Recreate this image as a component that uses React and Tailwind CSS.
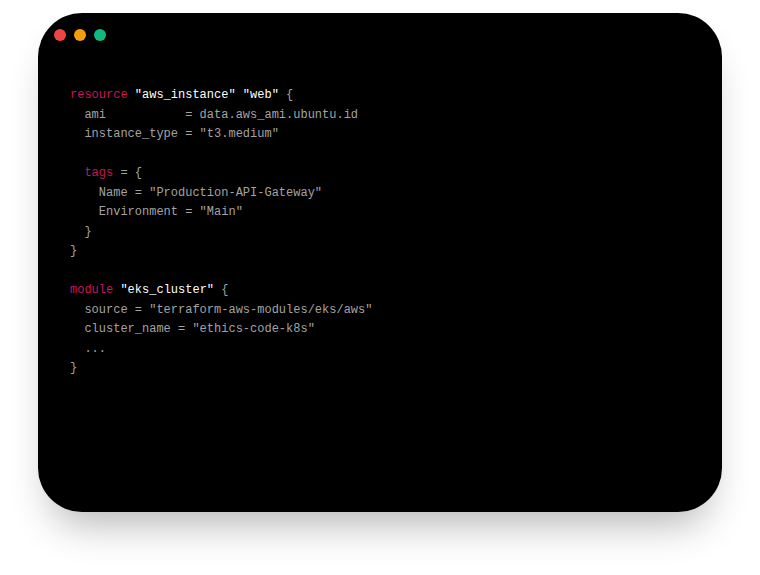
export default function App() {
  const kw = 'text-[#c8145a]';
  const str = 'text-white';
  return (
    <div className="min-h-screen bg-white flex items-start justify-center pt-[13px]">
      <div className="w-[684px] h-[499px] bg-black rounded-[44px] shadow-[0_25px_40px_-14px_rgba(0,0,0,0.3)] overflow-hidden">
        {/* Window controls */}
        <div className="flex gap-2 p-4">
          <span className="w-3 h-3 rounded-full bg-[#ef4444]"></span>
          <span className="w-3 h-3 rounded-full bg-[#f59e0b]"></span>
          <span className="w-3 h-3 rounded-full bg-[#10b981]"></span>
        </div>

        <pre className="px-8 mt-[29px] text-[12px] leading-[19.5px] text-[#a3a3a3] font-['Liberation_Mono',monospace]">
          <span className={kw}>resource</span> <span className={str}>"aws_instance"</span>{' '}
          <span className={str}>"web"</span> {'{'}
          {'\n'}  ami           = data.aws_ami.ubuntu.id
          {'\n'}  instance_type = "t3.medium"
          {'\n'}
          {'\n'}  <span className={kw}>tags</span> = {'{'}
          {'\n'}    Name = "Production-API-Gateway"
          {'\n'}    Environment = "Main"
          {'\n'}  {'}'}
          {'\n'}{'}'}
          {'\n'}
          {'\n'}<span className={kw}>module</span> <span className={str}>"eks_cluster"</span> {'{'}
          {'\n'}  source = "terraform-aws-modules/eks/aws"
          {'\n'}  cluster_name = "ethics-code-k8s"
          {'\n'}  ...
          {'\n'}{'}'}
        </pre>
      </div>
    </div>
  );
}
